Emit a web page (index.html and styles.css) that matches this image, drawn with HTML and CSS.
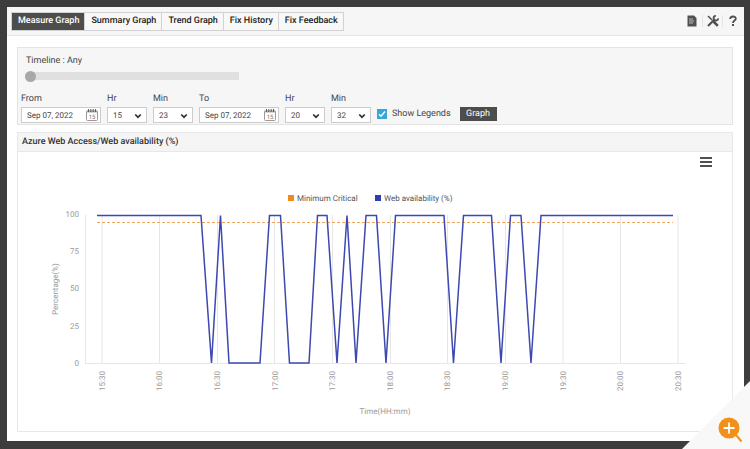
FILE: index.html
```html
<!DOCTYPE html>
<html lang="en-us">

<head>
<meta charset="utf-8">
<title>Measure Graph</title>
<meta name="viewport" content="width=device-width, initial-scale=1" />
<link rel="stylesheet" href="styles.css">
</head>

<body>

    <!-- Shared icons -->
    <svg class="defs" aria-hidden="true">
      <symbol id="calendar" viewBox="0 0 12 12">
        <rect x="0.5" y="2" width="11" height="9.5" rx="1" fill="#fff" stroke="#999" />
        <path d="M0.5,1.5 H11.5 V3.5 H0.5 Z" fill="#aaa" />
        <path d="M2.5,0 V3 M4.8,0 V3 M7.2,0 V3 M9.5,0 V3" stroke="#555" stroke-width="0.9" />
        <text x="6" y="9.8" font-size="6" text-anchor="middle" fill="#777">15</text>
      </symbol>
      <symbol id="arrow" viewBox="0 0 8 6">
        <path d="M1.2,1.5 L4,4.2 L6.8,1.5" fill="none" stroke="#333" stroke-width="1.7" />
      </symbol>
    </svg>

    <main id="mainContent">
      <header class="topbar">
        <nav class="tabs">
          <button type="button" class="tab active">Measure Graph</button>
          <button type="button" class="tab">Summary Graph</button>
          <button type="button" class="tab">Trend Graph</button>
          <button type="button" class="tab">Fix History</button>
          <button type="button" class="tab">Fix Feedback</button>
        </nav>
        <div class="tools">
          <button type="button" class="tool" aria-label="Report">
            <svg width="10" height="12" viewBox="0 0 10 12">
              <path d="M0.5,0.5 H7 L9.5,3 V11.5 H0.5 Z" fill="#505050" />
              <path d="M2,4 H6 M2,6 H7 M2,8 H6" stroke="#c8c8c8" stroke-width="0.9" />
            </svg>
          </button>
          <button type="button" class="tool" aria-label="Settings">
            <svg width="12" height="12" viewBox="0 0 12 12" fill="none" stroke="#505050">
              <path d="M1,11 L8,4" stroke-width="2.2" />
              <path d="M8.8,0.8 A2.4,2.4 0 1 0 11.3,3.4" stroke-width="1.7" />
              <path d="M1,1 L5,5" stroke-width="1.6" />
              <path d="M6.5,6.5 L10.8,10.8" stroke-width="2.6" />
            </svg>
          </button>
          <button type="button" class="tool" aria-label="Help">
            <svg width="8" height="12" viewBox="0 0 8 12">
              <path d="M1.2,4 C1.2,0.7 6.8,0.7 6.8,3.7 C6.8,5.6 4,5.5 4,8" fill="none" stroke="#505050" stroke-width="1.8" />
              <rect x="3" y="9" width="2" height="2" fill="#505050" />
            </svg>
          </button>
        </div>
      </header>

      <form class="filters">
        <label class="timelineLabel" for="timeline">Timeline : Any</label>
        <input id="timeline" type="range" min="0" max="10" value="0">

        <div class="fields">
          <div class="field">
            <label for="from">From</label>
            <div class="date">
              <input id="from" type="text" value="Sep 07, 2022">
              <svg width="12" height="12"><use href="#calendar" /></svg>
            </div>
          </div>
          <div class="field">
            <label for="fromHr">Hr</label>
            <div class="drop">
              <select id="fromHr"><option>15</option></select>
              <svg width="8" height="6"><use href="#arrow" /></svg>
            </div>
          </div>
          <div class="field">
            <label for="fromMin">Min</label>
            <div class="drop">
              <select id="fromMin"><option>23</option></select>
              <svg width="8" height="6"><use href="#arrow" /></svg>
            </div>
          </div>
          <div class="field">
            <label for="to">To</label>
            <div class="date">
              <input id="to" type="text" value="Sep 07, 2022">
              <svg width="12" height="12"><use href="#calendar" /></svg>
            </div>
          </div>
          <div class="field">
            <label for="toHr">Hr</label>
            <div class="drop">
              <select id="toHr"><option>20</option></select>
              <svg width="8" height="6"><use href="#arrow" /></svg>
            </div>
          </div>
          <div class="field">
            <label for="toMin">Min</label>
            <div class="drop">
              <select id="toMin"><option>32</option></select>
              <svg width="8" height="6"><use href="#arrow" /></svg>
            </div>
          </div>
          <div class="actions">
            <span class="check">
              <input id="legends" type="checkbox" checked>
              <svg width="10" height="10" viewBox="0 0 10 10"><path d="M2,5.2 L4,7.3 L8,2.5" fill="none" stroke="#fff" stroke-width="1.4" /></svg>
            </span>
            <label for="legends">Show Legends</label>
            <button type="button" class="go">Graph</button>
          </div>
        </div>
      </form>

      <section class="graph">
        <h2>Azure Web Access/Web availability (%)</h2>
        <div class="chart">
          <button type="button" class="menu" aria-label="Chart menu">
            <svg width="12" height="10" viewBox="0 0 12 10"><path d="M0,1 H12 M0,5 H12 M0,9 H12" stroke="#505050" stroke-width="2" /></svg>
          </button>
          <svg class="plot" viewBox="0 0 714 279">
            <!-- Legend -->
            <rect x="270" y="43" width="6" height="6" fill="#f08a1d" />
            <text class="legend" x="279" y="49">Minimum Critical</text>
            <rect x="357" y="43" width="6" height="6" fill="#2f3db5" />
            <text class="legend" x="366" y="49">Web availability (%)</text>

            <!-- Grid and axes -->
            <path class="grid" d="M84,63 V211 M141.5,63 V211 M199.5,63 V211 M256.5,63 V211 M314.5,63 V211 M372.5,63 V211 M429.5,63 V211 M487.5,63 V211 M545,63 V211 M602.5,63 V211 M660,63 V211" />
            <path class="axis" d="M67.5,63 V211.5 H667" />

            <g text-anchor="end">
              <text x="61" y="65">100</text>
              <text x="61" y="102">75</text>
              <text x="61" y="139">50</text>
              <text x="61" y="177">25</text>
              <text x="61" y="214">0</text>
            </g>

            <g text-anchor="end">
              <text transform="translate(87,219) rotate(-90)">15:30</text>
              <text transform="translate(144,219) rotate(-90)">16:00</text>
              <text transform="translate(202,219) rotate(-90)">16:30</text>
              <text transform="translate(260,219) rotate(-90)">17:00</text>
              <text transform="translate(317,219) rotate(-90)">17:30</text>
              <text transform="translate(375,219) rotate(-90)">18:00</text>
              <text transform="translate(432,219) rotate(-90)">18:30</text>
              <text transform="translate(490,219) rotate(-90)">19:00</text>
              <text transform="translate(548,219) rotate(-90)">19:30</text>
              <text transform="translate(605,219) rotate(-90)">20:00</text>
              <text transform="translate(663,219) rotate(-90)">20:30</text>
            </g>

            <g text-anchor="middle">
              <text x="367" y="262">Time(HH:mm)</text>
              <text transform="translate(40,137) rotate(-90)">Percentage(%)</text>
            </g>

            <!-- Series -->
            <path class="critical" d="M79,70.5 H655" />
            <polyline class="web" points="79,63.5 183,63.5 193.5,211 202.5,63.5 211,211 242,211 251.5,63.5 262.5,63.5 271.5,211 291,211 299.5,63.5 309,63.5 319,211 329,63.5 338,211 348,63.5 358.5,63.5 368,211 377.5,63.5 426,63.5 435.5,211 445.5,63.5 473.5,63.5 483,211 492.5,63.5 503,63.5 513,211 523,63.5 655,63.5" />
          </svg>
        </div>
      </section>
    </main>

    <a class="zoom" href="#mainContent" aria-label="Zoom in">
      <svg width="26" height="26" viewBox="0 0 26 26">
        <circle cx="11" cy="11" r="10.5" fill="#f39019" />
        <path d="M18,18 L23.5,24.5" stroke="#f39019" stroke-width="2" />
        <path d="M5.5,11 H16.5 M11,5.5 V16.5" stroke="#fff" stroke-width="1.8" />
      </svg>
    </a>

</body>
</html>
```
FILE: styles.css
```css
* { box-sizing: border-box; }

body {
  margin: 0;
  padding: 7px 6px 8px 7px;
  background-color: #3d3d3d;
  font-family: Roboto, "Liberation Sans", sans-serif;
  font-size: 9px;
  text-rendering: geometricPrecision;
  color: #444;
}

button, input, select {
  margin: 0;
  padding: 0;
  border: 0;
  font-family: inherit;
  text-rendering: inherit;
  color: inherit;
}

svg { display: block; }

.defs {
  position: absolute;
  width: 0;
  height: 0;
}

#mainContent {
  background-color: #fff;
  padding-bottom: 9px;
}

/* Tabs and tools */
.topbar {
  display: flex;
  justify-content: space-between;
  align-items: center;
  height: 29px;
  padding: 0 2px 0 4px;
  background-color: #f6f6f6;
  border-bottom: 1px solid #e4e4e4;
}

.tabs {
  display: flex;
  border: 1px solid #d2d2d2;
}

.tab {
  padding: 0 5px 0 6px;
  background-color: #f8f8f8;
  border-right: 1px solid #d2d2d2;
  font-size: 9px;
  font-weight: 500;
  line-height: 17px;
  color: #222;
}
.tab:last-child { border-right: 0; }
.tab.active {
  background-color: #4d4d4d;
  color: #fff;
}

.tools { display: flex; }
.tool {
  display: flex;
  justify-content: center;
  width: 20px;
  background: none;
  border-left: 1px solid #e4e4e4;
}
.tool:first-child { border-left: 0; }

/* Filter box */
.filters {
  margin: 11px 11px 7px 10px;
  padding: 7px 3px 1px;
  background-color: #f6f6f6;
  border: 1px solid #e4e4e4;
}

.timelineLabel {
  display: block;
  margin-left: 5px;
  line-height: 12px;
}

#timeline {
  display: block;
  width: 214px;
  height: 12px;
  margin: 3px 0 11px 4px;
  appearance: none;
  background: linear-gradient(#e0e0e0, #e0e0e0) 5px 2px / 209px 8px no-repeat;
}
#timeline::-webkit-slider-thumb {
  appearance: none;
  width: 11px;
  height: 11px;
  border-radius: 50%;
  background-color: #a8a8a8;
}

.fields {
  display: flex;
  align-items: flex-end;
  gap: 6px;
}

.field label {
  display: block;
  margin-bottom: 2px;
  line-height: 12px;
}

.date, .drop {
  height: 16px;
  background-color: #fff;
  border: 1px solid #ccc;
}

.date {
  display: flex;
  align-items: center;
  width: 80px;
  padding: 0 2px 0 5px;
}
.date input {
  flex: 1;
  min-width: 0;
  font-size: 8px;
}

.drop {
  position: relative;
  width: 40px;
}
.drop select {
  display: block;
  width: 100%;
  height: 14px;
  padding-left: 5px;
  appearance: none;
  background: none;
  font-size: 8px;
}
.drop svg {
  position: absolute;
  right: 4px;
  top: 5px;
  pointer-events: none;
}

.actions {
  display: flex;
  align-items: center;
  height: 18px;
}

.check {
  position: relative;
  margin-right: 5px;
}
.check input {
  display: block;
  width: 10px;
  height: 10px;
  appearance: none;
  background-color: #35a8d8;
}
.check svg {
  position: absolute;
  left: 0;
  top: 0;
  pointer-events: none;
}

.go {
  width: 37px;
  height: 14px;
  margin-left: 9px;
  background-color: #4d4d4d;
  font-size: 9px;
  line-height: 14px;
  color: #fff;
}

/* Graph box */
.graph {
  margin: 0 11px 0 10px;
  border: 1px solid #e8e8e8;
}

.graph h2 {
  margin: 0;
  padding: 1px 4px 0;
  background-color: #f5f5f5;
  border-bottom: 1px solid #e8e8e8;
  font-size: 9px;
  font-weight: 500;
  line-height: 17px;
  color: #333;
}

.chart { position: relative; }

.menu {
  position: absolute;
  right: 18px;
  top: 3px;
  padding: 2px;
  background: none;
}

.plot {
  width: 100%;
  height: auto;
}
.plot text {
  font-size: 8px;
  fill: #999;
}
.plot .legend { fill: #555; }
.grid, .axis {
  fill: none;
  stroke: #e6e6e6;
}
.critical {
  stroke: #f3a55c;
  stroke-dasharray: 3 2;
}
.web {
  fill: none;
  stroke: #3d48b0;
  stroke-width: 1.5;
}

/* Folded corner with the magnifier */
.zoom {
  position: fixed;
  right: 0;
  bottom: 0;
  padding: 36px 6px 6px 36px;
  background-color: #f8f8f8;
  clip-path: polygon(100% 0, 100% 100%, 0 100%);
}
```
